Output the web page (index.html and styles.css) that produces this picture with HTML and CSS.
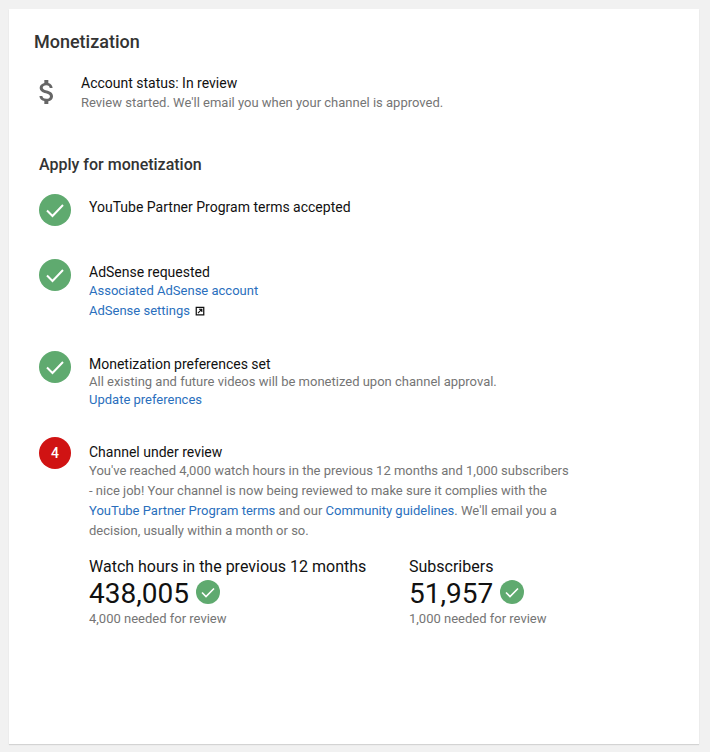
FILE: index.html
```html
<!DOCTYPE html>
<html lang="en">

<head>
  <meta charset="UTF-8">
  <title>Monetization</title>
  <link rel="stylesheet" href="styles.css">
</head>

<body>
  <div class="card">
    <h1 class="title">Monetization</h1>

    <div class="status">
      <svg class="dollar" viewBox="0 0 24 24"><path d="M11.8 10.9c-2.27-.59-3-1.2-3-2.15 0-1.09 1.01-1.85 2.7-1.85 1.78 0 2.44.85 2.5 2.1h2.21c-.07-1.72-1.12-3.3-3.21-3.81V3h-3v2.16c-1.94.42-3.5 1.68-3.5 3.61 0 2.31 1.91 3.46 4.7 4.13 2.5.6 3 1.48 3 2.41 0 .69-.49 1.79-2.7 1.79-2.06 0-2.87-.92-2.98-2.1h-2.2c.12 2.19 1.76 3.42 3.68 3.83V21h3v-2.15c1.95-.37 3.5-1.5 3.5-3.55 0-2.84-2.43-3.81-4.7-4.4z" fill="#666" /></svg>
      <div>
        <div class="step-title">Account status: In review</div>
        <div class="muted status-note">Review started. We'll email you when your channel is approved.</div>
      </div>
    </div>

    <h2 class="subtitle">Apply for monetization</h2>

    <div class="step step-terms">
      <svg class="badge" viewBox="0 0 32 32"><circle cx="16" cy="16" r="16" fill="#5faa6f" /><path d="M8 16.5l5.5 5.5L24 11" fill="none" stroke="#fff" stroke-width="2" /></svg>
      <div class="step-body">
        <div class="step-title">YouTube Partner Program terms accepted</div>
      </div>
    </div>

    <div class="step step-adsense">
      <svg class="badge" viewBox="0 0 32 32"><circle cx="16" cy="16" r="16" fill="#5faa6f" /><path d="M8 16.5l5.5 5.5L24 11" fill="none" stroke="#fff" stroke-width="2" /></svg>
      <div class="step-body">
        <div class="step-title">AdSense requested</div>
        <div class="link-line"><a href="#">Associated AdSense account</a></div>
        <div class="link-line">
          <a href="#">AdSense settings</a>
          <svg class="external" viewBox="0 0 12 12"><path d="M1.5 1.5h9v9h-9z" fill="none" stroke="#111" stroke-width="1.5" /><path d="M3.5 8.500l4.500-4.500M4.800 3.800h3.400v3.400" fill="none" stroke="#111" stroke-width="1.300" /></svg>
        </div>
      </div>
    </div>

    <div class="step step-prefs">
      <svg class="badge" viewBox="0 0 32 32"><circle cx="16" cy="16" r="16" fill="#5faa6f" /><path d="M8 16.5l5.5 5.5L24 11" fill="none" stroke="#fff" stroke-width="2" /></svg>
      <div class="step-body">
        <div class="step-title">Monetization preferences set</div>
        <div class="muted">All existing and future videos will be monetized upon channel approval.</div>
        <div class="link-line link-tight"><a href="#">Update preferences</a></div>
      </div>
    </div>

    <div class="step step-review">
      <div class="badge badge-red">4</div>
      <div class="step-body">
        <div class="step-title">Channel under review</div>
        <p class="review-text">You've reached 4,000 watch hours in the previous 12 months and 1,000 subscribers - nice job! Your channel is now being reviewed to make sure it complies with the <a href="#">YouTube Partner Program terms</a> and our <a href="#">Community guidelines</a>. We'll email you a decision, usually within a month or so.</p>

        <div class="stats">
          <div class="stat stat-hours">
            <div class="stat-label">Watch hours in the previous 12 months</div>
            <div class="stat-value">438,005
              <svg class="badge-small" viewBox="0 0 24 24"><circle cx="12" cy="12" r="12" fill="#5faa6f" /><path d="M6 12.5l4 4L18 8.500" fill="none" stroke="#fff" stroke-width="1.600" /></svg>
            </div>
            <div class="muted">4,000 needed for review</div>
          </div>
          <div class="stat">
            <div class="stat-label">Subscribers</div>
            <div class="stat-value">51,957
              <svg class="badge-small" viewBox="0 0 24 24"><circle cx="12" cy="12" r="12" fill="#5faa6f" /><path d="M6 12.5l4 4L18 8.500" fill="none" stroke="#fff" stroke-width="1.600" /></svg>
            </div>
            <div class="muted">1,000 needed for review</div>
          </div>
        </div>
      </div>
    </div>
  </div>
</body>

</html>
```

FILE: styles.css
```css
body {
  background: #f1f1f1;
  margin: 0;
  padding: 9px 11px 8px 9px;
  font-family: Roboto, sans-serif;
  color: #111;
}

a {
  color: #2a6fbd;
  text-decoration: none;
}

.card {
  background: #fff;
  height: 735px;
  box-sizing: border-box;
  padding: 23px 25px 0;
  box-shadow: 0 1px 1px rgba(0, 0, 0, 0.12);
}

.title {
  font-size: 18px;
  line-height: 20px;
  font-weight: 500;
  color: #333;
  margin: 0 0 22px;
}

.status {
  display: flex;
}

.dollar {
  width: 32px;
  height: 32px;
  flex: none;
  margin: 2px 18px 0 -3px;
}

.status-note {
  margin-top: 2px;
}

.subtitle {
  font-size: 16px;
  line-height: 20px;
  font-weight: 500;
  color: #333;
  margin: 43px 0 19px 5px;
}

.step {
  display: flex;
  margin-left: 5px;
}

.step-terms {
  margin-bottom: 33px;
}

.step-adsense {
  margin-bottom: 30px;
}

.step-prefs {
  margin-bottom: 28px;
}

.badge {
  width: 32px;
  height: 32px;
  flex: none;
}

.badge-red {
  background: #d01313;
  border-radius: 50%;
  color: #fff;
  font-size: 14px;
  font-weight: 500;
  line-height: 32px;
  text-align: center;
}

.step-body {
  margin-left: 18px;
  padding-top: 4px;
}

.step-review .step-body {
  padding-top: 6px;
}

.step-title {
  font-size: 14px;
  line-height: 18px;
}

.muted {
  font-size: 13px;
  line-height: 18px;
  color: #757575;
}

.link-line {
  font-size: 13px;
  line-height: 20px;
}

.link-tight {
  line-height: 18px;
}

.external {
  width: 10px;
  height: 10px;
  margin-left: 2px;
  vertical-align: -1px;
}

.review-text {
  width: 486px;
  margin: 0;
  font-size: 13px;
  line-height: 20px;
  color: #757575;
}

.stats {
  display: flex;
  margin-top: 16px;
}

.stat-hours {
  width: 320px;
}

.stat-label {
  font-size: 16px;
  line-height: 20px;
}

.stat-value {
  display: flex;
  align-items: center;
  gap: 7px;
  font-size: 28px;
  line-height: 33px;
  color: #111;
}

.stat-value .badge-small {
  margin-bottom: 4px;
}

.badge-small {
  width: 24px;
  height: 24px;
}
```
